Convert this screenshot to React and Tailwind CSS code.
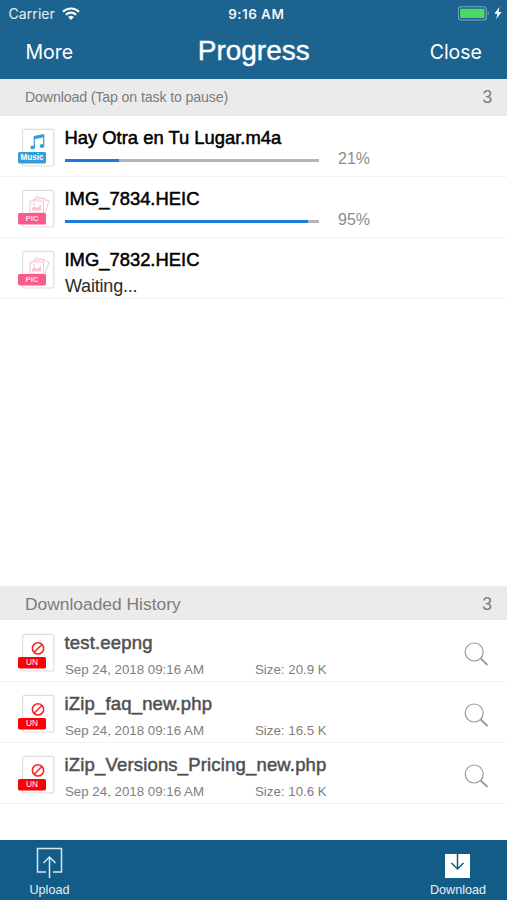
import React from "react";

const downloads = [
  { name: "Hay Otra en Tu Lugar.m4a", type: "music", percent: 21, loaded: 0.212 },
  { name: "IMG_7834.HEIC", type: "pic", percent: 95, loaded: 0.958 },
  { name: "IMG_7832.HEIC", type: "pic", status: "Waiting..." },
];

const history = [
  { name: "test.eepng", date: "Sep 24, 2018 09:16 AM", size: "20.9 K" },
  { name: "iZip_faq_new.php", date: "Sep 24, 2018 09:16 AM", size: "16.5 K" },
  { name: "iZip_Versions_Pricing_new.php", date: "Sep 24, 2018 09:16 AM", size: "10.6 K" },
];

const badges = {
  music: { label: "Music", color: "#2f9fd6", size: 8.5, weight: 700, length: 23 },
  pic: { label: "PIC", color: "#fb5b8c", size: 7.5, weight: 700, length: 13 },
  un: { label: "UN", color: "#fb0106", size: 8.2, weight: 400, length: 12 },
};

const FileIcon = ({ type }) => {
  const badge = badges[type];
  return (
    <svg width="38" height="40" viewBox="0 0 38 40" className="shrink-0">
      <rect x="4.6" y="1.4" width="31.2" height="36.6" rx="2" fill="#fff" stroke="#dedede" strokeWidth="1.2" />
      {type === "music" && (
        <g fill="#2f9fd6">
          <path d="M15.9 8 L26.2 6 V9.2 L15.9 11.2 Z" />
          <path d="M16.3 8.5 V19 M25.7 7 V17.6" stroke="#2f9fd6" strokeWidth="1.2" />
          <ellipse cx="14.7" cy="19.4" rx="2.3" ry="1.9" />
          <ellipse cx="24" cy="18" rx="2.3" ry="1.9" />
        </g>
      )}
      {type === "pic" && (
        <g fill="none" stroke="#fbc3d1" strokeWidth="1">
          <path d="M16 11 L18 7.5 L31 12 L27.2 23.5 H26" />
          <path d="M14.5 11 L26 9 L27.2 11.5" />
          <rect x="12" y="12" width="13.5" height="12" />
          <path d="M14 21.5 V19 L16.5 17 L19 19 L23 15.5 V21.5 Z" fill="#fbc3d1" stroke="none" />
          <circle cx="15.8" cy="15.3" r="1" fill="#fbc3d1" stroke="none" />
        </g>
      )}
      {type === "un" && (
        <g fill="none" stroke="#f5252b" strokeWidth="1.6">
          <circle cx="20" cy="15.4" r="5.6" />
          <path d="M16.1 19.3 L23.9 11.5" />
        </g>
      )}
      <rect x="0" y="24" width="28" height="11.4" rx="1.6" fill={badge.color} />
      <text
        x="14"
        y="32.4"
        textAnchor="middle"
        fontSize={badge.size}
        fontWeight={badge.weight}
        textLength={badge.length}
        lengthAdjust="spacingAndGlyphs"
        fill={type === "pic" ? "#ffdbe5" : "#fff"}
      >
        {badge.label}
      </text>
    </svg>
  );
};

const StatusBar = () => (
  <div className="flex h-7 items-center justify-between pl-[8.5px] pr-[5px] font-['Inter',sans-serif] text-[13.5px] text-white">
    <div className="flex w-40 items-center gap-[7px]">
      <span className="-mt-px text-[14px] tracking-[0.08px] text-white/90">Carrier</span>
      <svg width="18" height="13" viewBox="0 0 18 13" className="-mt-0.5">
        <g fill="none" stroke="#fff" strokeWidth="2.1">
          <path d="M1 4.8 A11.4 11.4 0 0 1 17 4.8" />
          <path d="M3.9 7.7 A7.3 7.3 0 0 1 14.1 7.7" />
        </g>
        <path d="M9 13 L6.2 10.1 A4 4 0 0 1 11.8 10.1 Z" fill="#fff" />
      </svg>
    </div>
    <span className="pl-0.5 font-semibold tracking-[0.45px] text-white/95">9:16 AM</span>
    <div className="flex w-40 items-center justify-end gap-[3px]">
      <svg width="33" height="15" viewBox="0 0 33 15" className="-mt-0.5">
        <rect x="0.3" y="0.8" width="28" height="13.2" rx="2.8" fill="none" stroke="#7fa6bf" strokeWidth="1.1" />
        <rect x="2.1" y="2.7" width="24.4" height="9.4" rx="0.8" fill="#4cd964" />
        <path d="M29.8 5 Q31.7 7.4 29.8 9.8 Z" fill="#7fa6bf" />
      </svg>
      <svg width="8" height="12" viewBox="0 0 8 12" className="-mt-0.5">
        <path d="M5.5 0 L0.3 6.7 H3.4 L2.2 12 L7.6 4.9 H4.5 Z" fill="#fff" />
      </svg>
    </div>
  </div>
);

const SectionHeader = ({ children, count, className }) => (
  <div className={`flex shrink-0 items-center justify-between bg-[#ebebeb] pl-[25px] pr-[15px] text-[#7c7c7c] ${className}`}>
    <span>{children}</span>
    <span className="text-[17.5px]">{count}</span>
  </div>
);

const DownloadRow = ({ item }) => (
  <li className="flex h-[61px] border-b border-[#f2f2f2] pl-[18px] pt-3">
    <FileIcon type={item.type} />
    <div className="ml-[9px] w-[254px]">
      <p className="-ml-[0.5px] -mt-px whitespace-nowrap text-[18.4px] leading-[22px] text-black [-webkit-text-stroke:0.5px_#000]">
        {item.name}
      </p>
      {item.status ? (
        <p className="mt-1 text-[18px] leading-[22px] tracking-[-0.2px] text-[#2c2c2c]">{item.status}</p>
      ) : (
        <div className="mt-[10px] h-[3px] bg-[#b5b5b5]">
          <div className="h-full bg-[#1878dc]" style={{ width: `${item.loaded * 100}%` }}></div>
        </div>
      )}
    </div>
    {!item.status && (
      <span className="ml-[19px] mt-[21px] text-[16px] leading-[20px] text-[#8c8c8c]">{item.percent}%</span>
    )}
  </li>
);

const HistoryRow = ({ item }) => (
  <li className="flex h-[61px] border-b border-[#f2f2f2] pl-[18px] pr-[18px] pt-3">
    <FileIcon type="un" />
    <div className="ml-[9px] flex-1">
      <p className="-ml-[0.5px] -mt-px whitespace-nowrap text-[18.5px] leading-[22px] tracking-[0.17px] text-[#505050] [-webkit-text-stroke:0.5px_#505050]">
        {item.name}
      </p>
      <div className="mt-[7px] flex text-[13.3px] leading-[18px] text-[#808080]">
        <span className="w-[190px]">{item.date}</span>
        <span>Size: {item.size}</span>
      </div>
    </div>
    <svg width="25" height="25" viewBox="0 0 25 25" className="mt-[9px]" fill="none" stroke="#999">
      <circle cx="10.2" cy="10" r="9" strokeWidth="1.2" />
      <path d="M16.7 16.5 L23.5 23" strokeWidth="1.8" />
    </svg>
  </li>
);

const App = () => {
  return (
    <div className="flex h-[900px] w-[507px] flex-col overflow-hidden bg-white font-['Liberation_Sans',Arial,sans-serif]">
      <header className="h-[79px] shrink-0 bg-[#1c648f]">
        <StatusBar />
        <div className="flex h-[46px] items-center justify-between pl-[25.5px] pr-[25px] text-white">
          <button className="w-20 pt-1 text-left font-['Inter',sans-serif] text-[19.5px]">More</button>
          <h1 className="-mt-px text-[28px] leading-[32px] [-webkit-text-stroke:0.4px_#fff]">Progress</h1>
          <button className="w-20 pt-1 text-right font-['Inter',sans-serif] text-[19.5px]">Close</button>
        </div>
      </header>

      <SectionHeader count={3} className="h-[37px] text-[14.2px] tracking-[-0.14px]">
        Download (Tap on task to pause)
      </SectionHeader>
      <ul className="flex-1">
        {downloads.map((item) => (
          <DownloadRow key={item.name} item={item} />
        ))}
      </ul>

      <SectionHeader count={3} className="h-[34px] pt-0.5 text-[17.4px]">
        Downloaded History
      </SectionHeader>
      <ul className="h-[220px] shrink-0 pt-px">
        {history.map((item) => (
          <HistoryRow key={item.name} item={item} />
        ))}
      </ul>

      <footer className="flex h-[60px] shrink-0 justify-between bg-[#145c88] pl-[29.5px] pr-[21px] text-[12.6px] leading-[16px] text-white/90">
        <button className="flex flex-col items-center pt-[7px]">
          <svg width="27" height="31" viewBox="0 0 27 31" fill="none" stroke="#d5e8f2" strokeWidth="1.5">
            <path d="M10 25 H1.5 V1.5 H25.5 V25 H17" />
            <path d="M13.5 31 V10.5 M7.5 16 L13.5 10 L19.5 16" />
          </svg>
          <span className="mt-1">Upload</span>
        </button>
        <button className="flex flex-col items-center pt-[14px]">
          <svg width="25" height="24" viewBox="0 0 25 24">
            <rect width="25" height="24" fill="#fff" />
            <path d="M12.5 0 V14.5 M6.5 9 L12.5 15 L18.5 9" fill="none" stroke="#145c88" strokeWidth="1.5" />
          </svg>
          <span className="mt-1">Download</span>
        </button>
      </footer>
    </div>
  );
};

export default App;
